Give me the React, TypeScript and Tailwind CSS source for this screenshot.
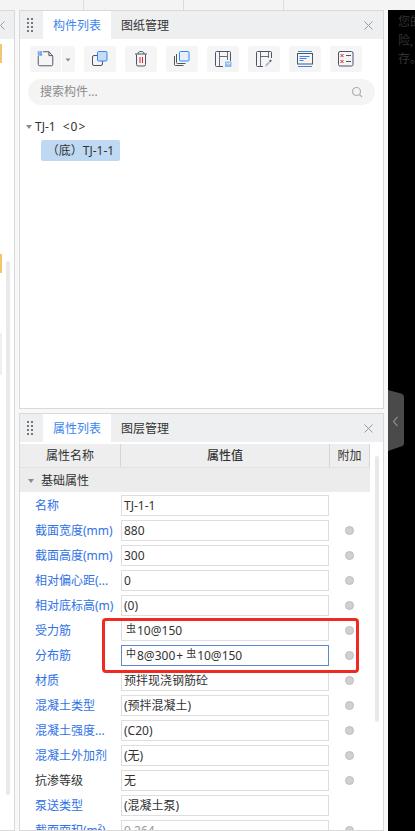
const FONT = { fontFamily: '"Noto Sans", "Noto Sans CJK SC", sans-serif' };

interface PropRow {
  label: string;
  value: string;
  blue?: boolean;
  radio?: boolean;
  active?: boolean;
  muted?: boolean;
}

const rows: PropRow[] = [
  { label: '名称', value: 'TJ-1-1', blue: true, radio: false },
  { label: '截面宽度(mm)', value: '880', blue: true, radio: true },
  { label: '截面高度(mm)', value: '300', blue: true, radio: true },
  { label: '相对偏心距(...', value: '0', blue: true, radio: true },
  { label: '相对底标高(m)', value: '(0)', blue: true, radio: true },
  { label: '受力筋', value: 'rebar1', blue: true, radio: true },
  { label: '分布筋', value: 'rebar2', blue: true, radio: true, active: true },
  { label: '材质', value: '预拌现浇钢筋砼', blue: true, radio: true },
  { label: '混凝土类型', value: '(预拌混凝土)', blue: true, radio: true },
  { label: '混凝土强度...', value: '(C20)', blue: true, radio: true },
  { label: '混凝土外加剂', value: '(无)', blue: true, radio: true },
  { label: '抗渗等级', value: '无', radio: true },
  { label: '泵送类型', value: '(混凝土泵)', blue: true, radio: false },
  { label: '截面面积(m²)', value: '0.264', blue: true, radio: true, muted: true },
];

function Grip() {
  return (
    <div className="grid grid-cols-2 gap-x-[2px] gap-y-[2px] w-[6px] ml-[7px] mr-[10px]">
      {Array.from({ length: 8 }).map((_, i) => (
        <span key={i} className="w-[2px] h-[2px] bg-[#777777]" />
      ))}
    </div>
  );
}

function CloseIcon() {
  return (
    <svg width="9" height="9" viewBox="0 0 9 9" className="ml-auto mr-[10px]">
      <path d="M0.5 0.5L8.5 8.5M8.5 0.5L0.5 8.5" stroke="#9a9a9a" strokeWidth="1" fill="none" />
    </svg>
  );
}

function PanelHeader({ active, other }: { active: string; other: string }) {
  return (
    <div className="flex items-center h-[28px] bg-[#eeeff1] shrink-0">
      <Grip />
      <div className="w-[68px] h-full pt-[1px] bg-white text-[#3a86ee] text-[12px] flex items-center justify-center">{active}</div>
      <div className="w-[68px] h-full pt-[1px] text-[#333333] text-[12px] flex items-center justify-center">{other}</div>
      <CloseIcon />
    </div>
  );
}

const stroke = '#4b5568';

function ToolIcon({ children }: { children: React.ReactNode }) {
  return (
    <div className="w-[32px] h-[26px] bg-[#f5f5f5] rounded-[3px]">
      <svg width="32" height="26" viewBox="0 0 32 26" fill="none">
        {children}
      </svg>
    </div>
  );
}

function Toolbar() {
  return (
    <div className="flex items-center gap-[9px] pl-[10px] pt-[7px] shrink-0">
      <div className="flex w-[45px] h-[26px] bg-[#f5f5f5] rounded-[3px]">
        <svg width="32" height="26" viewBox="0 0 32 26" fill="none" className="border-r border-white">
          <path d="M8.500 10v8.500a1.500 1.500 0 0 0 1.500 1.500h12a1.500 1.500 0 0 0 1.500-1.500V10l-4-4.500h-6" stroke={stroke} />
          <path d="M19.500 5.500v4h4" stroke={stroke} />
          <rect x="8" y="5" width="4.500" height="4.500" fill="#5a96ea" />
          <path d="M9 6h1M11 7h1M9 8h1" stroke="#ffffff" />
        </svg>
        <svg width="12" height="26" viewBox="0 0 12 26">
          <path d="M3.500 12.500h5l-2.500 3z" fill="#8c8c8c" />
        </svg>
      </div>
      <ToolIcon>
        <rect x="8.500" y="9.500" width="10" height="10" rx="1.500" stroke={stroke} />
        <rect x="13.500" y="5.500" width="9.500" height="9.500" rx="1" fill="#c6dbf6" stroke="#3a86ee" />
      </ToolIcon>
      <ToolIcon>
        <path d="M11.500 8.500v10a1.500 1.500 0 0 0 1.500 1.500h6a1.500 1.500 0 0 0 1.500-1.500v-10" stroke={stroke} />
        <path d="M10 8h12M13 8c0-2 1-2.500 3-2.500s3 .5 3 2.500" stroke={stroke} />
        <path d="M15 11v6M17.500 11v6" stroke="#e0242a" />
      </ToolIcon>
      <ToolIcon>
        <path d="M8.500 10v8.500a1 1 0 0 0 1 1h8" stroke={stroke} />
        <path d="M10.500 8v8.500a1 1 0 0 0 1 1h8" stroke={stroke} />
        <rect x="13.500" y="5.500" width="9.500" height="9.500" rx="1" fill="#e6f0fc" stroke="#3a86ee" />
      </ToolIcon>
      <ToolIcon>
        <path d="M16 20.500H9.500a1 1 0 0 1-1-1V6.500a1 1 0 0 1 1-1h13a1 1 0 0 1 1 1V15" stroke={stroke} />
        <path d="M12.500 20V5.500M20.500 14V5.500M12.500 10.500h8" stroke={stroke} strokeOpacity="0.85" />
        <rect x="18" y="15.500" width="6.500" height="5.500" fill="#8dbbf2" />
        <path d="M19.500 17l1.800 1.300 1.800-1.300" stroke="#ffffff" />
      </ToolIcon>
      <ToolIcon>
        <path d="M15 20.500H9.500a1 1 0 0 1-1-1V6.500a1 1 0 0 1 1-1h13a1 1 0 0 1 1 1V12" stroke={stroke} />
        <path d="M12.500 20V5.500M20.500 12V5.500M12.500 10.500h8" stroke={stroke} strokeOpacity="0.85" />
        <path d="M17 21l1-3 2.500-2.500 1.500 1.500-2.500 2.500z" fill="#b4bbc6" />
        <path d="M21 15l1.500-1.500 1.300 1.300-1.500 1.500z" fill="#4b5568" />
      </ToolIcon>
      <ToolIcon>
        <path d="M9 5.500h14M9 20.500h14" stroke="#3a86ee" />
        <rect x="8.500" y="7.500" width="15" height="10.500" stroke={stroke} />
        <path d="M10.500 10.500h10M10.500 12.500h7M10.500 14.500h4" stroke="#3a86ee" />
      </ToolIcon>
      <ToolIcon>
        <rect x="8.500" y="5.500" width="14.500" height="14.500" rx="1.500" stroke={stroke} />
        <path d="M10.500 8l3 3M13.500 8l-3 3M10.500 14l3 3M13.500 14l-3 3" stroke="#e0242a" />
        <path d="M16 9.500h5M16 15.500h5" stroke={stroke} />
      </ToolIcon>
    </div>
  );
}

function Rebar({ kind }: { kind: 'a' | 'b' }) {
  return (
    <span className="inline-block w-[11px] ml-[2px] text-[10px] leading-[10px] relative top-[-3px]">
      {kind === 'a' ? '虫' : '中'}
    </span>
  );
}

function ValueText({ value }: { value: string }) {
  if (value === 'rebar1') {
    return (
      <span>
        <Rebar kind="a" />
        10@150
      </span>
    );
  }
  if (value === 'rebar2') {
    return (
      <span>
        <Rebar kind="b" />
        8@300
        <span className="mx-[1px]">+</span>
        <Rebar kind="a" />
        10@150
      </span>
    );
  }
  return <span>{value}</span>;
}

function Row({ row }: { row: PropRow }) {
  return (
    <div className="flex items-center h-[25px] shrink-0">
      <div className={`w-[101px] pl-[15px] text-[12px] whitespace-nowrap overflow-hidden ${row.blue ? 'text-[#2f72e6]' : 'text-[#333333]'}`}>
        {row.label}
      </div>
      <div
        className={`w-[208px] h-[21px] flex items-center pl-[2px] text-[12px] whitespace-nowrap border ${
          row.active ? 'border-[#5f87cf]' : 'border-[#dedede]'
        } ${row.muted ? 'text-[#999999]' : 'text-[#333333]'}`}
      >
        <ValueText value={row.value} />
      </div>
      <div className="w-[41px] flex justify-center pb-[1px]">
        {row.radio && <span className="w-[9px] h-[9px] rounded-full bg-[#d0d0d0] border border-[#bdbdbd]" />}
      </div>
    </div>
  );
}

function PropertyTable() {
  return (
    <div className="flex-1 flex min-h-0 pt-[2px] overflow-hidden">
      <div className="w-[350px] shrink-0 flex flex-col">
        <div className="flex h-[24px] bg-[#eeeeee] text-[12px] text-[#333333] border-b border-[#e2e2e2] shrink-0">
          <div className="w-[101px] pt-[1px] flex items-center justify-center border-r border-[#d6d6d6]">属性名称</div>
          <div className="w-[209px] pt-[1px] flex items-center justify-center border-r border-[#d6d6d6] font-medium">属性值</div>
          <div className="w-[40px] pt-[1px] flex items-center justify-center border-r border-[#d6d6d6]">附加</div>
        </div>
        <div className="flex items-center h-[24px] pt-[1px] bg-[#ececec] text-[12px] text-[#333333] shrink-0">
          <svg width="6" height="4" viewBox="0 0 6 4" className="ml-[8px] mr-[7px]">
            <path d="M0 0h6L3 4z" fill="#8c8c8c" />
          </svg>
          基础属性
        </div>
        <div className="flex flex-col pt-[1px]">
          {rows.map((r) => (
            <Row key={r.label} row={r} />
          ))}
        </div>
      </div>
      <div className="ml-[5px] mt-[12px] w-[4px] h-[266px] rounded-full bg-[#e9e9e9]" />
    </div>
  );
}

export default function App() {
  return (
    <div className="relative w-[415px] h-[831px] overflow-hidden flex flex-col bg-white" style={FONT}>
      {/* top strip */}
      <div className="flex h-[10px] bg-[#f4f4f4] shrink-0">
        <div className="w-[84px] border-r border-[#dcdcdc]" />
        <div className="w-[100px] border-r border-[#dcdcdc]" />
        <div className="w-[100px] border-r border-[#dcdcdc]" />
      </div>

      <div className="flex-1 flex min-h-0">
        {/* left clipped panel */}
        <div className="relative w-[15px] shrink-0 bg-white border-t border-b border-r border-[#d9d9d9]">
          <div className="h-[28px] bg-[#eeeff1] flex items-center">
            <svg width="5" height="9" viewBox="0 0 5 9">
              <path d="M4.500 0.500L0.500 4.500L4.500 8.500" stroke="#9a9a9a" fill="none" />
            </svg>
          </div>
          <div className="absolute left-0 top-[33px] w-[2px] h-[19px] bg-[#f3c56e]" />
          <div className="absolute left-0 top-[243px] w-[2px] h-[19px] bg-[#f3c56e]" />
          <div className="absolute left-0 top-[322px] w-[2px] h-[42px] bg-[#eeeef4]" />
          <div className="absolute left-[6px] top-[250px] w-[4px] h-[534px] rounded-full bg-[#e9e9e9]" />
        </div>

        {/* main column */}
        <div className="w-[373px] shrink-0 px-[4px] flex flex-col gap-[4px] bg-[#f8f8f8]">
          <div className="h-[399px] shrink-0 bg-white border border-[#d9d9d9] flex flex-col">
            <PanelHeader active="构件列表" other="图纸管理" />
            <Toolbar />
            <div className="mx-[8px] mt-[7px] h-[26px] rounded-full bg-[#f4f4f4] flex items-center px-[12px] text-[12px] text-[#8c8c8c] shrink-0">
              搜索构件...
              <svg width="12" height="12" viewBox="0 0 12 12" fill="none" className="ml-auto">
                <circle cx="5.500" cy="5.500" r="4" stroke="#b0b0b0" strokeWidth="1.200" />
                <path d="M8.500 8.500L11 11" stroke="#b0b0b0" strokeWidth="1.200" />
              </svg>
            </div>
            <div className="flex items-center h-[18px] mt-[13px] pl-[6px] text-[12px] text-[#333333]">
              <svg width="6" height="4" viewBox="0 0 6 4" className="mr-[3px]">
                <path d="M0 0h6L3 4z" fill="#8c8c8c" />
              </svg>
              TJ-1
              <span className="ml-[7px] tracking-[1px]">&lt;0&gt;</span>
            </div>
            <div className="ml-[21px] mt-[4px] w-[79px] h-[21px] rounded-[2px] bg-[#bfd9f2] flex items-center justify-center text-[12px] text-[#333333]">
              （底）TJ-1-1
            </div>
          </div>

          <div className="flex-1 min-h-0 bg-white border border-[#d9d9d9] flex flex-col">
            <PanelHeader active="属性列表" other="图层管理" />
            <PropertyTable />
          </div>
        </div>

        {/* black side */}
        <div className="flex-1 bg-black overflow-hidden pl-[10px] pt-[3px] text-[12px] leading-[18.500px] text-[#333333] whitespace-nowrap">
          <div>您的</div>
          <div>险,</div>
          <div>存。</div>
        </div>
      </div>

      {/* collapse handle */}
      <svg width="16" height="62" viewBox="0 0 16 62" className="absolute left-[388px] top-[390px]">
        <path d="M0 0L13 3.500Q16 4.500 16 7V53Q16 55.500 13 56.500L0 61z" fill="#4a4a4a" />
        <path d="M9.500 27L5.500 31.500L9.500 36" stroke="#8a8a8a" strokeWidth="1.200" fill="none" />
      </svg>

      {/* red annotation */}
      <div className="absolute left-[102px] top-[618px] w-[257px] h-[55px] border-[3px] border-[#f02a20] rounded-[4px]" />
    </div>
  );
}
